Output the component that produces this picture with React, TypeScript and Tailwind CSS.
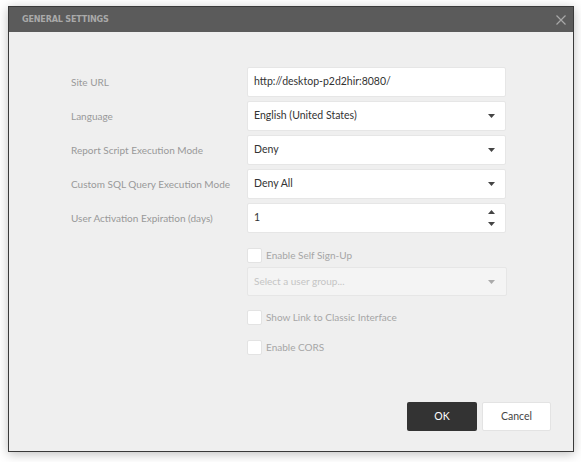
const font = { fontFamily: 'Lato, "Open Sans", sans-serif' };

const Caret = ({ className = "" }: { className?: string }) => (
  <svg width="7" height="4" viewBox="0 0 7 4" className={className}>
    <path d="M0 0h7L3.5 4z" fill="currentColor" />
  </svg>
);

const rows = [
  { label: "Site URL", value: "http://desktop-p2d2hir:8080/", kind: "text" },
  { label: "Language", value: "English (United States)", kind: "select" },
  { label: "Report Script Execution Mode", value: "Deny", kind: "select" },
  { label: "Custom SQL Query Execution Mode", value: "Deny All", kind: "select" },
  { label: "User Activation Expiration (days)", value: "1", kind: "spin" },
] as const;

function Check({ label }: { label: string }) {
  return (
    <div className="flex h-[15px] items-center gap-[4px]">
      <span className="h-[15px] w-[15px] rounded-[2px] border border-[#e3e3e3] bg-white" />
      <span className="text-[10px] text-[#a6a6a6]">{label}</span>
    </div>
  );
}

export default function App() {
  return (
    <div className="h-[462px] w-[581px] bg-white pl-[8px] pt-[6px]" style={font}>
      <div className="flex h-[446px] w-[566px] flex-col border border-[#3a3a3a] bg-[#efefef] shadow-[0_2px_10px_rgba(0,0,0,0.25)]">
        <div className="flex h-[25px] items-center justify-between bg-[#5b5b5b] pl-[13px] pr-[7px]">
          <span
            className="text-[9px] font-bold tracking-[-0.2px] text-[#a9a9a9]"
            style={{ fontFamily: '"Liberation Sans Narrow", "DejaVu Sans Condensed", sans-serif' }}
          >
            GENERAL SETTINGS
          </span>
          <svg width="10" height="10" viewBox="0 0 10 10" className="text-[#a8a8a8]">
            <path d="M0.5 0.5l9 9M9.5 0.5l-9 9" stroke="currentColor" strokeWidth="1.2" />
          </svg>
        </div>
        <div className="flex flex-1 flex-col pt-[35px]">
          <div className="flex flex-col gap-[4px]">
            {rows.map((r) => (
              <div key={r.label} className="flex h-[30px] items-center">
                <span className="w-[238px] whitespace-nowrap pl-[62px] text-[10px] text-[#999999]">{r.label}</span>
                <div className="flex h-[30px] w-[259px] items-center justify-between rounded-[2px] border border-[#e6e6e6] bg-white pl-[6px] pr-[10px] text-[10.5px] text-[#333333]">
                  <span>{r.value}</span>
                  {r.kind === "select" && <Caret className="text-[#444]" />}
                  {r.kind === "spin" && (
                    <div className="flex flex-col gap-[8px] text-[#444]">
                      <Caret className="rotate-180" />
                      <Caret />
                    </div>
                  )}
                </div>
              </div>
            ))}
          </div>
          <div className="ml-[238px] mt-[15px] flex w-[260px] flex-col">
            <Check label="Enable Self Sign-Up" />
            <div className="mt-[4px] flex h-[29px] items-center justify-between rounded-[2px] border border-[#e6e6e6] bg-[#f4f4f4] pl-[6px] pr-[11px] text-[10px] text-[#c4c4c4]">
              <span>Select a user group...</span>
              <Caret className="text-[#aaa]" />
            </div>
            <div className="mt-[14px]">
              <Check label="Show Link to Classic Interface" />
            </div>
            <div className="mt-[15px]">
              <Check label="Enable CORS" />
            </div>
          </div>
          <div className="mt-auto mb-[20px] mr-[22px] flex justify-end gap-[5px]">
            <button className="h-[29px] w-[70px] rounded-[2px] bg-[#333333] text-[10.5px] text-white">OK</button>
            <button className="h-[29px] w-[69px] rounded-[2px] border border-[#e3e3e3] bg-white text-[10.5px] text-[#444]">
              Cancel
            </button>
          </div>
        </div>
      </div>
    </div>
  );
}
